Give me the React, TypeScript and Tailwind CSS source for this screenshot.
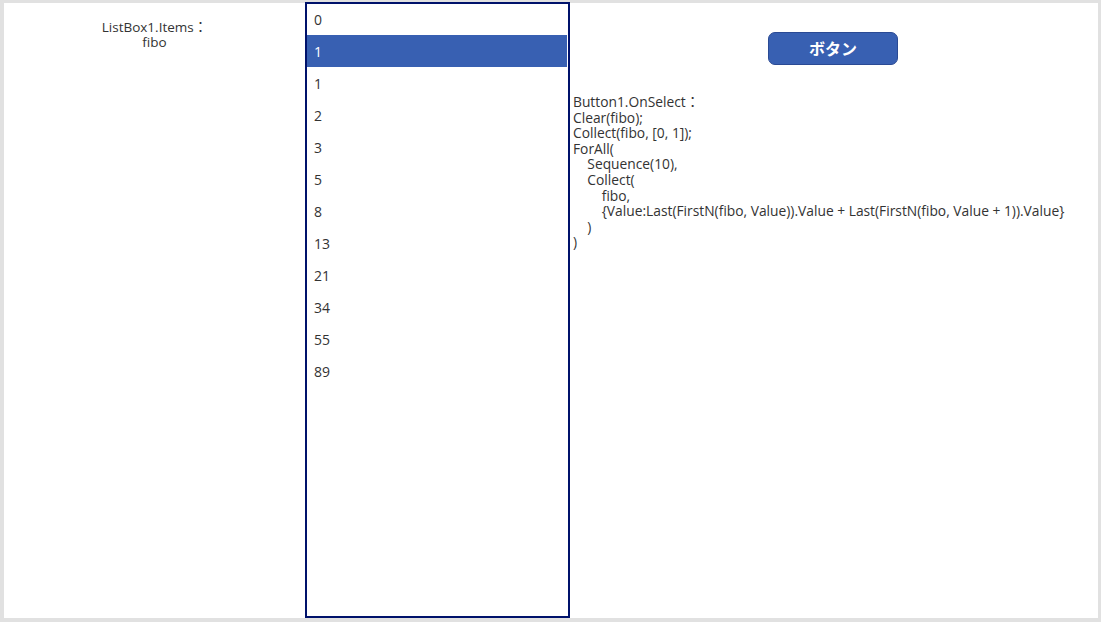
import React from "react";

const items = [0, 1, 1, 2, 3, 5, 8, 13, 21, 34, 55, 89];

const code = [
  "Button1.OnSelect：",
  "Clear(fibo);",
  "Collect(fibo, [0, 1]);",
  "ForAll(",
  "    Sequence(10),",
  "    Collect(",
  "        fibo,",
  "        {Value:Last(FirstN(fibo, Value)).Value + Last(FirstN(fibo, Value + 1)).Value}",
  "    )",
  ")",
];

export default function App() {
  return (
    <div
      className="w-[1101px] h-[622px] bg-[#e1e1e1] pt-[3px] pl-[4px] pr-[3px] pb-[4px] overflow-hidden"
      style={{ fontFamily: '"Open Sans", "Noto Sans CJK JP", sans-serif' }}
    >
      <div className="w-full h-full bg-white flex text-[#333333]">
        <div className="w-[301px] shrink-0 pt-[17px] text-center text-[13.5px] leading-[15px]">
          <div>ListBox1.Items：</div>
          <div>fibo</div>
        </div>
        <div className="w-[265px] h-[616px] -mt-[1px] shrink-0 border-2 border-[#00126b] bg-white overflow-hidden">
          <div className="-mt-[1px]">
            {items.map((v, i) => (
              <div
                key={i}
                className={
                  "h-[32px] flex items-center pl-[7px] text-[14px] " +
                  (i === 1 ? "bg-[#3860b2] text-white mr-[1px]" : "text-[#333333]")
                }
              >
                {v}
              </div>
            ))}
          </div>
        </div>
        <div className="flex-1 flex flex-col pl-[3px]">
          <div className="h-[91px] flex pt-[29px] pl-[195px]">
            <button className="w-[130px] h-[33px] rounded-[7px] bg-[#3860b2] border border-[#2a4a94] text-white font-bold text-[16px] leading-none flex items-center justify-center">
              ボタン
            </button>
          </div>
          <div className="text-[13.8px] leading-[15.6px] whitespace-pre">
            {code.map((l, i) => (
              <div key={i}>{l}</div>
            ))}
          </div>
        </div>
      </div>
    </div>
  );
}
